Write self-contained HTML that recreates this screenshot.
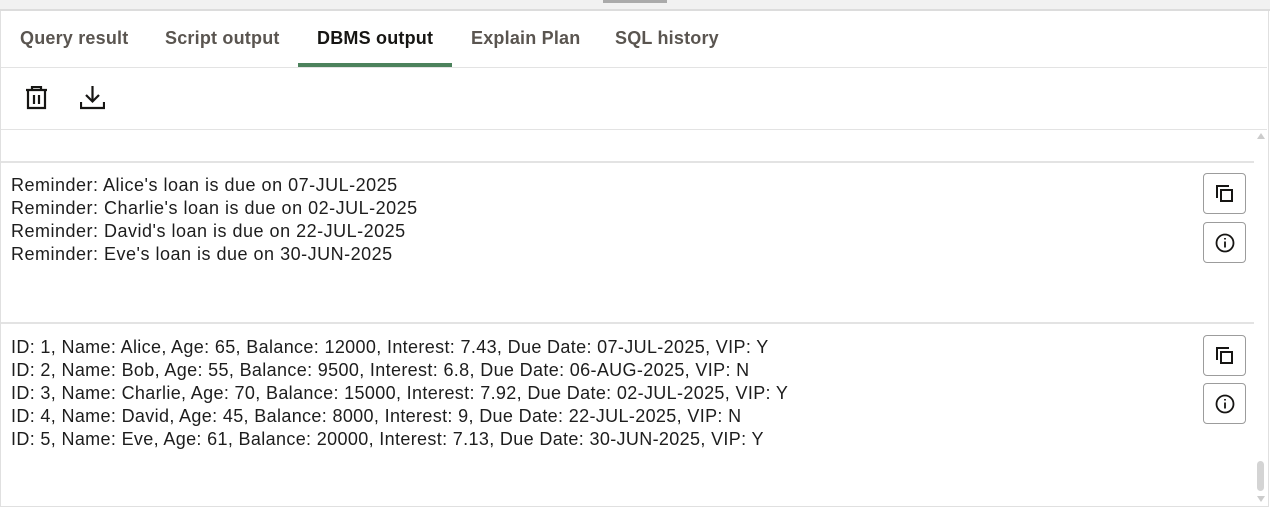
<!DOCTYPE html>
<html><head><style>
body{margin:0;width:1270px;height:508px;background:#fff;font-family:"Liberation Sans",sans-serif;position:relative;overflow:hidden}
.top{position:absolute;left:0;top:0;width:1270px;height:9px;background:#f1f1f1;border-bottom:2px solid #dcdcdc}
.handle{position:absolute;left:603px;top:0;width:64px;height:3px;background:#aaa}
.frame{position:absolute;left:0;top:11px;width:1267px;height:495px;border:1px solid #e0e0e0;border-top:none}
.tab{position:absolute;top:28px;font-size:18px;color:#5a5550;font-weight:bold;letter-spacing:0.2px}
.hl{position:absolute;left:1px;height:1px;background:#e3e3e3;width:1266px}
.out{position:absolute;left:11px;font-size:18px;line-height:23px;color:#1d1d1d;white-space:pre;letter-spacing:0.35px}
.btn{position:absolute;left:1203px;width:43px;height:41px;border:1px solid #9c9c9c;border-radius:4px;background:#fff;box-sizing:border-box}
.btn svg{position:absolute;left:11px;top:10px}
</style></head><body>
<div class="top"></div><div class="handle"></div>
<div class="frame"></div>
<div class="tab" style="left:20px">Query result</div>
<div class="tab" style="left:165px">Script output</div>
<div class="tab" style="left:317px;color:#161513">DBMS output</div>
<div class="tab" style="left:471px">Explain Plan</div>
<div class="tab" style="left:615px">SQL history</div>
<div style="position:absolute;left:298px;top:63px;width:154px;height:4px;background:#4c825c"></div>
<div class="hl" style="top:67px"></div>
<svg style="position:absolute;left:25px;top:86px" width="23" height="24" viewBox="0 0 23 24" fill="none" stroke="#161513" stroke-width="2.2"><path d="M1 4h21M7 4V1h9v3M3 5v17h17V5M9 9v9M14 9v9"/></svg>
<svg style="position:absolute;left:80px;top:86px" width="25" height="24" viewBox="0 0 25 24" fill="none" stroke="#161513" stroke-width="2.2"><path d="M12.5 0v15M6 9l6.5 6.5L19 9M1 16v6h23v-6"/></svg>
<div class="hl" style="top:129px"></div>
<div class="hl" style="top:161px;height:2px;width:1253px"></div>
<div class="out" style="top:174px;letter-spacing:0.5px">Reminder: Alice's loan is due on 07-JUL-2025
Reminder: Charlie's loan is due on 02-JUL-2025
Reminder: David's loan is due on 22-JUL-2025
Reminder: Eve's loan is due on 30-JUN-2025</div>
<div class="hl" style="top:322px;height:2px;width:1253px"></div>
<div class="out" style="top:336px">ID: 1, Name: Alice, Age: 65, Balance: 12000, Interest: 7.43, Due Date: 07-JUL-2025, VIP: Y
ID: 2, Name: Bob, Age: 55, Balance: 9500, Interest: 6.8, Due Date: 06-AUG-2025, VIP: N
ID: 3, Name: Charlie, Age: 70, Balance: 15000, Interest: 7.92, Due Date: 02-JUL-2025, VIP: Y
ID: 4, Name: David, Age: 45, Balance: 8000, Interest: 9, Due Date: 22-JUL-2025, VIP: N
ID: 5, Name: Eve, Age: 61, Balance: 20000, Interest: 7.13, Due Date: 30-JUN-2025, VIP: Y</div>
<div class="btn" style="top:173px"><svg width="20" height="20" viewBox="0 0 20 20" fill="none" stroke="#161513" stroke-width="2"><path d="M2 14V2h12"/><rect x="6" y="6" width="11" height="11"/></svg></div>
<div class="btn" style="top:222px"><svg width="20" height="20" viewBox="0 0 20 20" fill="none" stroke="#161513" stroke-width="1.8"><circle cx="10" cy="10" r="8.5"/><path d="M10 8.5v6M10 5v1.5"/></svg></div>
<div class="btn" style="top:335px"><svg width="20" height="20" viewBox="0 0 20 20" fill="none" stroke="#161513" stroke-width="2"><path d="M2 14V2h12"/><rect x="6" y="6" width="11" height="11"/></svg></div>
<div class="btn" style="top:383px"><svg width="20" height="20" viewBox="0 0 20 20" fill="none" stroke="#161513" stroke-width="1.8"><circle cx="10" cy="10" r="8.5"/><path d="M10 8.5v6M10 5v1.5"/></svg></div>
<div style="position:absolute;left:1257px;top:133px;width:0;height:0;border-left:4px solid transparent;border-right:4px solid transparent;border-bottom:6px solid #ccc"></div>
<div style="position:absolute;left:1257px;top:461px;width:7px;height:30px;border-radius:4px;background:#d4d4d4"></div>
<div style="position:absolute;left:1257px;top:496px;width:0;height:0;border-left:4px solid transparent;border-right:4px solid transparent;border-top:6px solid #ccc"></div>
</body></html>
